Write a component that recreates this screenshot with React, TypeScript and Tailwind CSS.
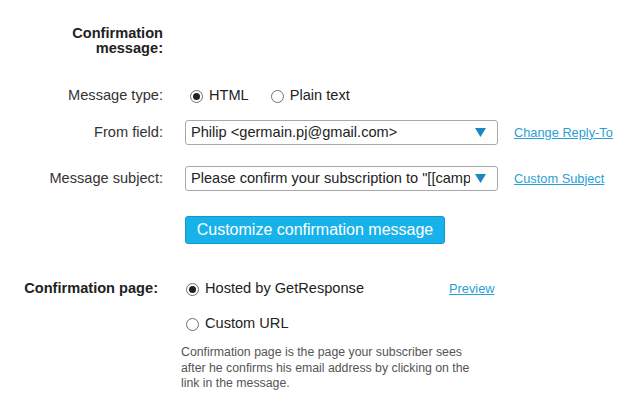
import React from "react";

function Radio({ checked }: { checked?: boolean }) {
  return (
    <span className="inline-flex h-[13px] w-[13px] shrink-0 items-center justify-center rounded-full border border-[#6f6f6f] bg-white">
      {checked && <span className="block h-[7px] w-[7px] rounded-full bg-[#222]" />}
    </span>
  );
}

function Select({ text }: { text: string }) {
  return (
    <div className="flex h-[25px] w-[313px] items-center rounded-[3px] border border-[#a9a9a9] bg-white pl-[5px] pr-[11px]">
      <span className="block w-[279px] overflow-hidden whitespace-nowrap text-[14.6px] text-[#222]">{text}</span>
      <svg width="11" height="9" viewBox="0 0 11 9" className="ml-auto shrink-0">
        <polygon points="0,0 11,0 5.5,9" fill="#1a87bf" />
      </svg>
    </div>
  );
}

export default function App() {
  return (
    <div
      className="h-[409px] w-[629px] overflow-hidden bg-white text-[14.6px] text-[#222]"
      style={{ fontFamily: '"Liberation Sans", Arial, sans-serif' }}
    >
      <div className="grid grid-cols-[163px_1fr] gap-x-[22px] pt-[26px]">
        <div className="text-right font-bold leading-[15px] text-[#222]">
          Confirmation
          <br />
          message:
        </div>
        <div />

        <div className="mt-[30px] flex h-[20px] items-center justify-end text-[#333]">Message type:</div>
        <div className="mt-[30px] flex h-[20px] items-center pl-[5px]">
          <Radio checked />
          <span className="ml-[6px]">HTML</span>
          <span className="ml-[22px] inline-flex items-center">
            <Radio />
          </span>
          <span className="ml-[6px]">Plain text</span>
        </div>

        <div className="mt-[14px] flex h-[25px] items-center justify-end text-[#333]">From field:</div>
        <div className="mt-[14px] flex items-center">
          <Select text="Philip <germain.pj@gmail.com>" />
          <a className="ml-[16px] whitespace-nowrap text-[12.8px] text-[#2a9fd4] underline">Change Reply-To</a>
        </div>

        <div className="mt-[21px] flex h-[25px] items-center justify-end text-[#333]">Message subject:</div>
        <div className="mt-[21px] flex items-center">
          <Select text={'Please confirm your subscription to "[[camp'} />
          <a className="ml-[16px] whitespace-nowrap text-[12.8px] text-[#2a9fd4] underline">Custom Subject</a>
        </div>

        <div />
        <div className="mt-[25px]">
          <button className="h-[28px] w-[260px] rounded-[3px] border border-[#1597c9] bg-[#18b2ea] text-[16px] text-white">
            Customize confirmation message
          </button>
        </div>
      </div>

      <div className="mt-[35px] grid grid-cols-[158px_1fr] gap-x-[23px]">
        <div className="flex h-[20px] items-center justify-end font-bold text-[#222]">Confirmation page:</div>
        <div className="flex h-[20px] items-center pl-[5px]">
          <Radio checked />
          <span className="ml-[6px]">Hosted by GetResponse</span>
          <a className="ml-[85px] text-[12.8px] text-[#2a9fd4] underline">Preview</a>
        </div>

        <div />
        <div className="mt-[15px] flex h-[20px] items-center pl-[5px]">
          <Radio />
          <span className="ml-[6px]">Custom URL</span>
        </div>

        <div />
        <div className="mt-[11px] w-[300px] text-[12.3px] leading-[15.5px] text-[#555]">
          Confirmation page is the page your subscriber sees after he confirms his email address by clicking on the
          link in the message.
        </div>
      </div>
    </div>
  );
}
